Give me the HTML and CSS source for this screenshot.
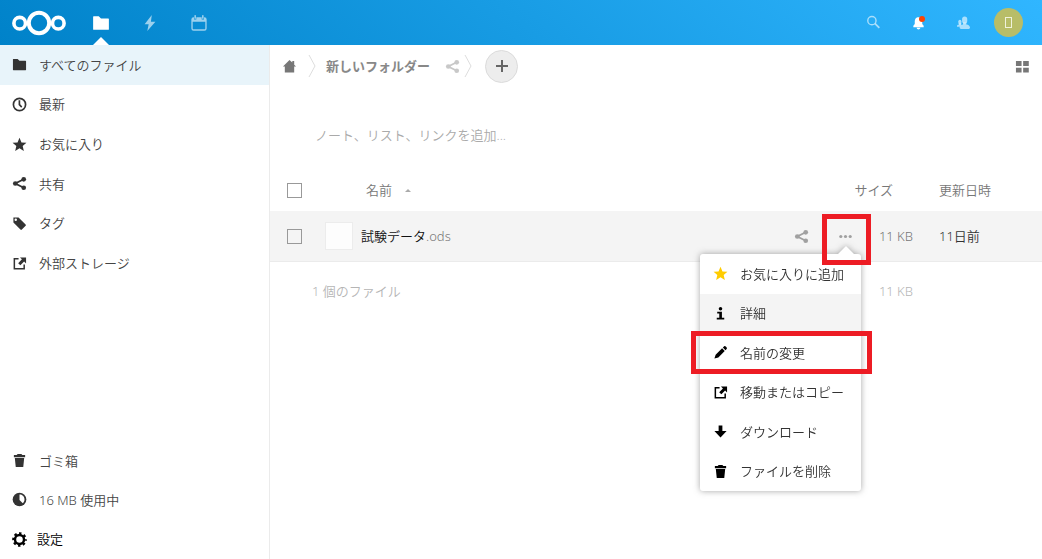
FILE: index.html
```html
<!DOCTYPE html>
<html lang="ja">
<head>
<meta charset="utf-8">
<meta name="viewport" content="width=device-width, initial-scale=1">
<title>ファイル - Nextcloud</title>
<link rel="stylesheet" href="styles.css">
</head>
<body>
<svg class="sprite" aria-hidden="true">
  <symbol id="folder" viewBox="0 0 16 16"><path d="M1.5 2a.5.5 0 0 0-.5.5v11c0 .3.2.5.5.5h13c.3 0 .5-.2.5-.5v-9a.5.5 0 0 0-.5-.5H8L6 2z"/></symbol>
  <symbol id="clock" viewBox="0 0 16 16"><circle cx="8" cy="8" r="6.500" fill="none" stroke="currentColor" stroke-width="1.800"/><path d="M7 3.500h1.800v4.200l2.200 2.500-1.200 1.200L7 8.600z"/></symbol>
  <symbol id="star" viewBox="0 0 16 16"><path d="M8 .9l2.100 4.900 5.300.4-4 3.500 1.200 5.200L8 12.100l-4.600 2.800 1.200-5.200-4-3.500 5.300-.4z"/></symbol>
  <symbol id="share" viewBox="0 0 16 16"><path d="M12.500 3.500 3.500 8l9 4.500" fill="none" stroke="currentColor" stroke-width="2"/><circle cx="12.500" cy="3.500" r="2.500"/><circle cx="3.500" cy="8" r="2.500"/><circle cx="12.500" cy="12.500" r="2.500"/></symbol>
  <symbol id="tag" viewBox="0 0 16 16"><path fill-rule="evenodd" d="M1.500 1.500H7L14.500 9a1 1 0 0 1 0 1.500L10.500 14.500a1 1 0 0 1-1.500 0L1.500 7zM4 2.700A1.300 1.300 0 1 0 4 5.300 1.300 1.300 0 0 0 4 2.700z"/></symbol>
  <symbol id="external" viewBox="0 0 16 16"><path d="M7 3H2.500v10.500H13V9" fill="none" stroke="currentColor" stroke-width="1.600"/><path d="M8.500 1.500H15V8l-2.100-2.100-4 4-2.300-2.300 4-4z"/></symbol>
  <symbol id="trash" viewBox="0 0 16 16"><path d="M6 1h4l1 1.200h3V4.500H2V2.200h3zM3 5.300h10L12 15H4z"/></symbol>
  <symbol id="quota" viewBox="0 0 16 16"><circle cx="8" cy="8" r="7.300"/><path d="M8 2.700c3 0 5.300 2.200 5.300 5.300 0 1.700-.7 3-1.800 4L8 8.500z" fill="#fff"/></symbol>
  <symbol id="gear" viewBox="0 0 16 16"><circle cx="8" cy="8" r="4.800" fill="none" stroke="currentColor" stroke-width="2.600"/><circle cx="8" cy="8" r="6.700" fill="none" stroke="currentColor" stroke-width="2.200" stroke-dasharray="2.630 2.630" stroke-dashoffset="1.300"/></symbol>
  <symbol id="home" viewBox="0 0 16 16"><path d="M8 1 1 8h2v6.500h10V8h2l-2-1.900V2h-2v1.800z"/></symbol>
  <symbol id="bolt" viewBox="0 0 20 20"><path d="M12 1 4 11.500h4.500L7 19 16 8.500h-5z"/></symbol>
  <symbol id="calendar" viewBox="0 0 20 20"><path fill-rule="evenodd" d="M4 3.500h.5V6h2.500V3.500h6V6h2.500V3.500H16a2.500 2.500 0 0 1 2.500 2.500V16A2.500 2.500 0 0 1 16 18.500H4A2.500 2.500 0 0 1 1.500 16V6A2.500 2.500 0 0 1 4 3.500zM3 8.500V16c0 .6.400 1 1 1h12c.6 0 1-.4 1-1V8.500z"/><rect x="4.900" y="1.200" width="1.700" height="4.200" rx=".8"/><rect x="13.400" y="1.200" width="1.700" height="4.200" rx=".8"/></symbol>
  <symbol id="search" viewBox="0 0 16 16"><circle cx="6.300" cy="6" r="4.400" fill="none" stroke="currentColor" stroke-width="1.500"/><path d="m9.700 9.300 4.500 4.500" stroke="currentColor" stroke-width="1.900"/></symbol>
  <symbol id="bell" viewBox="0 0 16 16"><path d="M7 2.500h2c1.800.5 2.800 2 3 4v3l1.500 2V13h-11v-1.500L4 9.500v-3c.2-2 1.200-3.500 3-4zM6 13.700h4c-.2 1.100-1 1.800-2 1.800s-1.800-.7-2-1.800z"/></symbol>
  <symbol id="contacts" viewBox="0 0 16 16"><rect x="6.500" y="1.500" width="5.500" height="7.500" rx="2.700"/><path d="M7.500 8h3.500v2c2.500.3 3.700 1.300 4 3.500-.5 1.300-1.500 1.500-3 1.500H6.500c-1.700 0-2.500-.5-2.700-1.500.2-2 1.200-3.200 3.700-3.500z"/><rect x="2.500" y="5" width="3.200" height="5" rx="1.600"/><path d="M3.300 9H5.500v2l-1.500 1.500H1c0-1.500.8-2.300 2.300-2.300z"/></symbol>
  <symbol id="info" viewBox="0 0 16 16"><circle cx="8" cy="3" r="1.900"/><path d="M4.500 6.200h5v6.300H12v2H4v-2h2.700V8H4.500z"/></symbol>
  <symbol id="pencil" viewBox="0 0 16 16"><path d="M12 1.200c1-.5 3.300 1.500 2.800 2.800l-1.500 1.500-2.800-2.800zM9.700 3.500l2.800 2.800-6.800 6.900L1.500 14.500l1.300-4.200z"/></symbol>
  <symbol id="download" viewBox="0 0 16 16"><path d="M6 1.500h4v6h4.500L8 14.500 1.500 7.500H6z"/></symbol>
  <symbol id="more" viewBox="0 0 16 16"><circle cx="3" cy="8" r="1.700"/><circle cx="8" cy="8" r="1.700"/><circle cx="13" cy="8" r="1.700"/></symbol>
  <symbol id="grid" viewBox="0 0 16 16"><path d="M1 2h6v5.500H1zM8.700 2h6v5.500h-6zM1 9.200h6v5.300H1zM8.700 9.200h6v5.300h-6z"/></symbol>
</svg>

<header class="topbar">
  <a class="logo" href="#" aria-label="Nextcloud">
    <svg viewBox="0 0 56 26"><circle cx="28" cy="13" r="10.200" stroke-width="4"/><circle cx="8.700" cy="13.200" r="5.800" stroke-width="3.600"/><circle cx="47.300" cy="13.200" r="5.800" stroke-width="3.600"/></svg>
  </a>
  <nav class="apps" aria-label="アプリ">
    <a class="app app-active" href="#" aria-label="ファイル"><svg class="icon-app"><use href="#folder"/></svg></a>
    <a class="app" href="#" aria-label="アクティビティ"><svg class="icon-app"><use href="#bolt"/></svg></a>
    <a class="app" href="#" aria-label="カレンダー"><svg class="icon-app"><use href="#calendar"/></svg></a>
  </nav>
  <div class="tools">
    <button class="tool" aria-label="検索"><svg class="icon"><use href="#search"/></svg></button>
    <button class="tool tool-bright" aria-label="通知"><svg class="icon"><use href="#bell"/></svg><span class="dot"></span></button>
    <button class="tool" aria-label="連絡先"><svg class="icon"><use href="#contacts"/></svg></button>
    <button class="tool tool-bright" aria-label="ユーザー"><span class="avatar"><span class="initial"></span></span></button>
  </div>
</header>

<div class="layout">
  <nav class="sidebar" aria-label="ナビゲーション">
    <div class="nav nav-main">
      <a class="nav-item nav-active" href="#"><svg class="icon"><use href="#folder"/></svg>すべてのファイル</a>
      <a class="nav-item" href="#"><svg class="icon"><use href="#clock"/></svg>最新</a>
      <a class="nav-item" href="#"><svg class="icon"><use href="#star"/></svg>お気に入り</a>
      <a class="nav-item" href="#"><svg class="icon"><use href="#share"/></svg>共有</a>
      <a class="nav-item" href="#"><svg class="icon"><use href="#tag"/></svg>タグ</a>
      <a class="nav-item" href="#"><svg class="icon"><use href="#external"/></svg>外部ストレージ</a>
    </div>
    <div class="nav nav-foot">
      <a class="nav-item" href="#"><svg class="icon"><use href="#trash"/></svg>ゴミ箱</a>
      <a class="nav-item" href="#"><svg class="icon"><use href="#quota"/></svg>16 MB 使用中</a>
      <button class="nav-item nav-settings"><svg class="icon"><use href="#gear"/></svg>設定</button>
    </div>
  </nav>

  <main class="content">
    <div class="controls">
      <a class="crumb-home" href="#" aria-label="ホーム"><svg class="icon"><use href="#home"/></svg></a>
      <svg class="chevron" viewBox="0 0 8 22"><path d="M1 0 7 11 1 22"/></svg>
      <a class="crumb" href="#">新しいフォルダー</a>
      <button class="crumb-share" aria-label="共有"><svg class="icon"><use href="#share"/></svg></button>
      <svg class="chevron" viewBox="0 0 8 22"><path d="M1 0 7 11 1 22"/></svg>
      <button class="add" aria-label="新規"><svg viewBox="0 0 16 16"><path d="M8 2v12M2 8h12"/></svg></button>
      <button class="view" aria-label="グリッド表示"><svg class="icon"><use href="#grid"/></svg></button>
    </div>
    <input class="notes" type="text" aria-label="ノート" placeholder="ノート、リスト、リンクを追加...">
    <table class="files">
      <thead>
        <tr>
          <th class="col-check"><input class="check" type="checkbox" aria-label="すべて選択"></th>
          <th class="col-name"><button class="sort">名前<span class="sort-arrow"></span></button></th>
          <th class="col-size">サイズ</th>
          <th class="col-date">更新日時</th>
        </tr>
      </thead>
      <tbody>
        <tr class="file">
          <td class="col-check"><input class="check" type="checkbox" aria-label="試験データ.odsを選択"></td>
          <td class="col-name">
            <div class="file-cell">
              <span class="thumb"></span>
              <a class="file-name" href="#">試験データ<span class="ext">.ods</span></a>
              <button class="action" aria-label="共有"><svg class="icon"><use href="#share"/></svg></button>
              <button class="action" aria-label="操作"><svg class="icon"><use href="#more"/></svg></button>
              <div class="popover">
                <button class="menu-item"><svg class="icon icon-star"><use href="#star"/></svg>お気に入りに追加</button>
                <button class="menu-item menu-hover"><svg class="icon"><use href="#info"/></svg>詳細</button>
                <button class="menu-item"><svg class="icon"><use href="#pencil"/></svg>名前の変更</button>
                <button class="menu-item"><svg class="icon"><use href="#external"/></svg>移動またはコピー</button>
                <button class="menu-item"><svg class="icon"><use href="#download"/></svg>ダウンロード</button>
                <button class="menu-item"><svg class="icon"><use href="#trash"/></svg>ファイルを削除</button>
              </div>
              <span class="mark mark-action"></span>
              <span class="mark mark-item"></span>
            </div>
          </td>
          <td class="col-size">11 KB</td>
          <td class="col-date">11日前</td>
        </tr>
      </tbody>
      <tfoot>
        <tr>
          <td class="col-check"></td>
          <td class="col-name">1 個のファイル</td>
          <td class="col-size">11 KB</td>
          <td class="col-date"></td>
        </tr>
      </tfoot>
    </table>
  </main>
</div>
</body>
</html>
```
FILE: styles.css
```css
* { box-sizing: border-box; }
body {
  margin: 0;
  height: 100vh;
  display: flex;
  flex-direction: column;
  font: 13px/20px "Noto Sans", "Noto Sans CJK JP", sans-serif;
  font-weight: 350;
  color: #333;
  background: #fff;
}
a { color: inherit; text-decoration: none; }
button, input {
  margin: 0;
  padding: 0;
  border: 0;
  background: none;
  color: inherit;
  font: inherit;
}
svg { display: block; fill: currentColor; flex: none; }
.sprite { position: absolute; width: 0; height: 0; }
.icon { width: 15px; height: 15px; }

.topbar {
  flex: none;
  height: 45px;
  display: flex;
  align-items: center;
  background: linear-gradient(40deg, #0082c9 0%, #30b6ff 100%);
  color: #fff;
}
.logo { padding-left: 11px; }
.logo svg { width: 56px; height: 26px; fill: none; stroke: #fff; }
.apps { display: flex; align-self: stretch; margin-left: 9px; }
.app {
  position: relative;
  width: 49px;
  display: flex;
  align-items: center;
  justify-content: center;
  color: rgba(255, 255, 255, .6);
}
.app-active { color: #fff; }
.app-active::after {
  content: "";
  position: absolute;
  bottom: 0;
  border: 8px solid transparent;
  border-top: 0;
  border-bottom-color: #fff;
}
.icon-app { width: 18px; height: 18px; }
.tools { display: flex; align-self: stretch; margin-left: auto; padding-right: 11px; }
.tool {
  position: relative;
  width: 45px;
  display: flex;
  align-items: center;
  justify-content: center;
  color: rgba(255, 255, 255, .6);
}
.tool-bright { color: #fff; }
.dot {
  position: absolute;
  top: 16px;
  right: 16px;
  width: 6px;
  height: 6px;
  border-radius: 50%;
  background: #ff4402;
}
.avatar {
  width: 29px;
  height: 29px;
  display: flex;
  align-items: center;
  justify-content: center;
  border-radius: 50%;
  background: #b8bd68;
}
.initial { width: 7px; height: 11px; border: 1px solid #f0f2dc; }

.layout { flex: 1; display: flex; min-height: 0; }
.sidebar {
  flex: none;
  width: 270px;
  display: flex;
  flex-direction: column;
  justify-content: space-between;
  border-right: 1px solid #ebebeb;
}
.nav { display: grid; grid-auto-rows: 1fr; }
.nav-main { height: 238px; }
.nav-foot { height: 118px; }
.nav-item {
  display: flex;
  align-items: center;
  gap: 12px;
  padding-left: 12px;
  color: #444;
}
.nav-item .icon { color: #333; }
.nav-active { background: #e8f4fa; }
.nav-settings, .nav-settings .icon { color: #000; }
.nav-settings { gap: 10px; }

.content { flex: 1; min-width: 0; }
.controls { display: flex; align-items: center; height: 42px; padding: 0 12px; color: #777; }
.chevron {
  width: 8px;
  height: 22px;
  fill: none;
  stroke: #ddd;
  stroke-width: 1;
}
.crumb-home { margin-right: 11px; }
.crumb { margin: 0 15px 0 10px; font-weight: 600; color: #888; }
.crumb-share { margin-right: 4px; color: #c8c8c8; }
.add {
  width: 33px;
  height: 33px;
  margin-left: 13px;
  display: flex;
  align-items: center;
  justify-content: center;
  border: 1px solid #dbdbdb;
  border-radius: 50%;
  background: #ededed;
}
.add svg { width: 16px; height: 16px; stroke: #666; stroke-width: 2; }
.view { margin-left: auto; }
.notes { display: block; width: 100%; height: 40px; margin-top: 28px; padding: 0 45px; }
.notes::placeholder { color: #aaa; opacity: 1; }

.files { width: 100%; margin-top: 14px; table-layout: fixed; border-collapse: collapse; }
.files th, .files td { padding: 0; font-weight: inherit; text-align: left; }
.files th { height: 42px; color: #777; }
.files .col-check { width: 42px; padding-left: 17px; }
.check {
  appearance: none;
  display: block;
  width: 15px;
  height: 15px;
  border: 1px solid #999;
  background: #fff;
}
.sort { display: flex; align-items: center; gap: 13px; margin-left: 54px; }
.sort-arrow { border: 3px solid transparent; border-top: 0; border-bottom-color: #aaa; }
.files .col-size { width: 88px; padding-right: 26px; text-align: right; color: #777; }
.files th.col-size { padding-right: 46px; white-space: nowrap; }
.files .col-date { width: 103px; }
.file { height: 50px; border-bottom: 1px solid #ebebeb; background: #f4f4f4; }
.file-cell {
  position: relative;
  height: 50px;
  margin-right: -16px;
  display: flex;
  align-items: center;
}
.file .check { background: transparent; }
.thumb {
  width: 28px;
  height: 28px;
  margin: 0 8px 0 13px;
  border: 1px solid #ececec;
  background: #fdfdfd;
}
.file-name { flex: 1; color: #111; }
.ext { color: #777; }
.file .col-date { color: #333; }
.action {
  width: 44px;
  height: 44px;
  display: flex;
  align-items: center;
  justify-content: center;
  color: #a0a0a0;
}
.files tfoot td, .files tfoot .col-size { height: 58px; color: #b5b5b5; }

.popover {
  position: absolute;
  z-index: 1;
  top: 43px;
  right: 6px;
  width: 161px;
  height: 237px;
  display: grid;
  grid-auto-rows: 1fr;
  border-radius: 3px;
  background: #fff;
  filter: drop-shadow(0 0 3px rgba(77, 77, 77, .5));
}
.popover::before {
  content: "";
  position: absolute;
  right: 7px;
  bottom: 100%;
  border: 8px solid transparent;
  border-top: 0;
  border-bottom-color: #fff;
}
.menu-item {
  display: flex;
  align-items: center;
  gap: 12px;
  padding-left: 13px;
  white-space: nowrap;
  color: #333;
}
.menu-item .icon { color: #000; }
.menu-item .icon-star { color: #fc0; }
.menu-hover { background: #f4f4f4; }
.mark { position: absolute; z-index: 2; border: 5px solid #ed1c24; pointer-events: none; }
.mark-action { top: 3px; right: -4px; width: 49px; height: 51px; }
.mark-item { top: 120px; right: -5px; width: 181px; height: 43px; }
```
